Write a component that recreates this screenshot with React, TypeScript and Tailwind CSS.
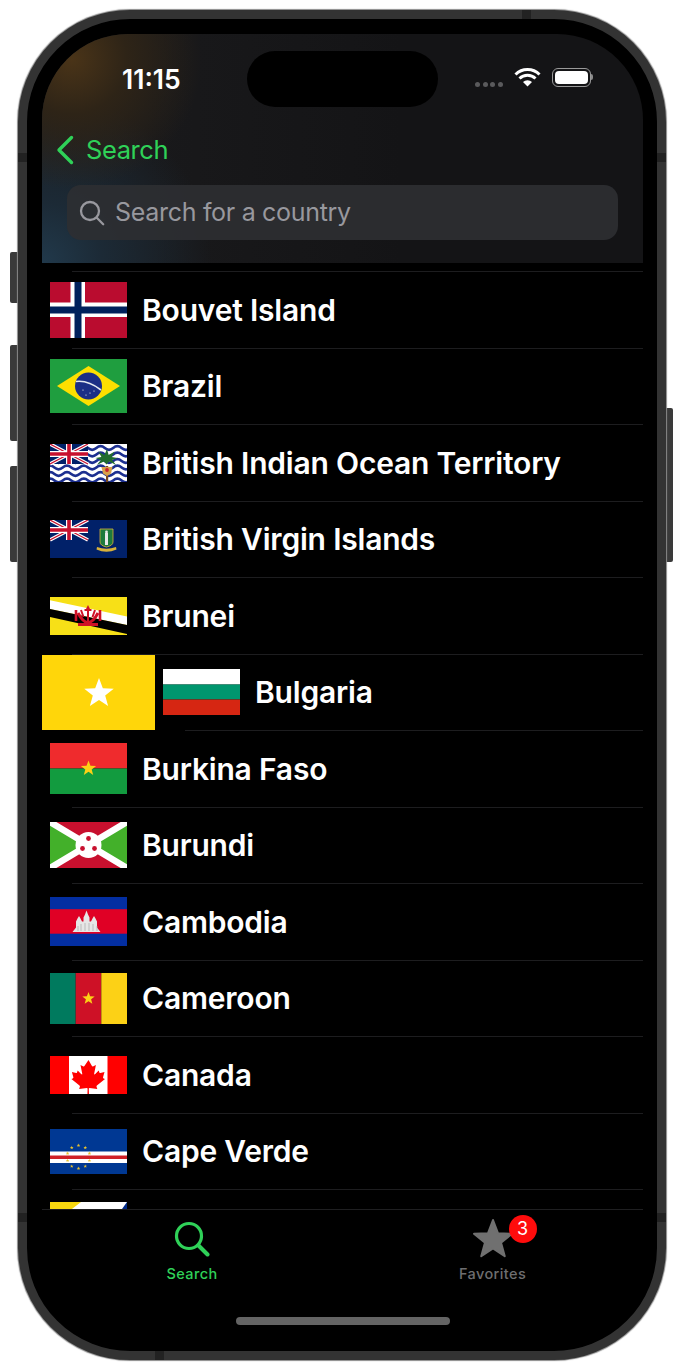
import React from 'react';

const star = (cx: number, cy: number, r: number) => {
  const pts: string[] = [];
  for (let i = 0; i < 10; i++) {
    const rad = i % 2 === 0 ? r : r * 0.42;
    const a = -Math.PI / 2 + (i * Math.PI) / 5;
    pts.push(`${(cx + rad * Math.cos(a)).toFixed(2)},${(cy + rad * Math.sin(a)).toFixed(2)}`);
  }
  return pts.join(' ');
};

// union jack canton, 38x20
const Jack = () => (
  <g>
    <rect width="38" height="20" fill="#012169" />
    <path d="M0 0L38 20M38 0L0 20" stroke="#fff" strokeWidth="3.6" />
    <path d="M0 0L38 20M38 0L0 20" stroke="#c8102e" strokeWidth="1.2" />
    <path d="M19 0V20M0 10H38" stroke="#fff" strokeWidth="6" />
    <path d="M19 0V20M0 10H38" stroke="#c8102e" strokeWidth="3.6" />
  </g>
);

const Flag = ({ h, children }: { h: number; children: React.ReactNode }) => (
  <svg width="77" height={h} viewBox={`0 0 77 ${h}`} className="block shrink-0">
    {children}
  </svg>
);

const flags: Record<string, React.ReactNode> = {
  bouvet: (
    <Flag h={56}>
      <rect width="77" height="56" fill="#ba0c2f" />
      <path d="M20.5 0h14.5v56h-14.5zM0 20.5h77v14.5h-77z" fill="#fff" />
      <path d="M24.5 0h7v56h-7zM0 24.5h77v7h-77z" fill="#00205b" />
    </Flag>
  ),
  brazil: (
    <Flag h={54}>
      <rect width="77" height="54" fill="#1f9e3f" />
      <path d="M7 27L38.5 7L70 27L38.5 47Z" fill="#fedf00" />
      <circle cx="38.5" cy="27" r="13.5" fill="#1b2e86" />
      <path d="M26 22.5Q38 21 51 31" fill="none" stroke="#e4e8f0" strokeWidth="1.6" />
      <circle cx="33" cy="31" r="0.6" fill="#fff" />
      <circle cx="40" cy="34" r="0.6" fill="#fff" />
      <circle cx="44" cy="32" r="0.6" fill="#fff" />
      <circle cx="36" cy="36" r="0.6" fill="#fff" />
    </Flag>
  ),
  biot: (
    <Flag h={38}>
      <rect width="77" height="38" fill="#fff" />
      {[4, 10.5, 17, 23.5, 30, 36.5].map((y) => (
        <path
          key={y}
          d={`M-4 ${y}q4.2 -3.6 8.4 0t8.4 0t8.4 0t8.4 0t8.4 0t8.4 0t8.4 0t8.4 0t8.4 0t8.4 0`}
          fill="none"
          stroke="#1c2f90"
          strokeWidth="2.6"
        />
      ))}
      <Jack />
      <rect x="56" y="22" width="2.2" height="16" fill="#7a4a1e" />
      <path d="M57 5l1.6 6l6 -3.5l-3 5.5l6 1l-5.5 2l4 5l-7 -3.5l-2.6 3l-2.6 -3l-7 3.5l4 -5l-5.5 -2l6 -1l-3 -5.5l6 3.5z" fill="#1f6b2e" />
      <path d="M51.5 23h11l-1.5 6.5l-4 2.5l-4 -2.5z" fill="#d8a04a" />
      <circle cx="57" cy="26" r="1.9" fill="#c8202e" />
    </Flag>
  ),
  bvi: (
    <Flag h={38}>
      <rect width="77" height="38" fill="#012169" />
      <Jack />
      <path d="M50 9h13v13q0 3.5 -6.5 5q-6.5 -1.5 -6.5 -5z" fill="#1e7a3c" stroke="#d8b13a" strokeWidth="0.8" />
      <path d="M55 13h3v12h-3z" fill="#e8e8e8" />
      <circle cx="56.5" cy="12" r="1.4" fill="#e8e8e8" />
      <path d="M47 27q9.5 3.5 19 0l.5 2.5q-10 4.5 -20 0z" fill="#d8b13a" />
    </Flag>
  ),
  brunei: (
    <Flag h={38}>
      <rect width="77" height="38" fill="#f7e017" />
      <path d="M0 3.3L77 19.5V28L0 12Z" fill="#fff" />
      <path d="M0 12L77 28V37L0 20Z" fill="#000" />
      <path d="M38 10V25M34.5 13h7M31 13l2.5 7M45 13l-2.5 7" stroke="#cf1126" strokeWidth="2" fill="none" />
      <path d="M38 8l2.5 5h-5z" fill="#cf1126" />
      <path d="M28 16Q38 35 48 16" stroke="#cf1126" strokeWidth="3" fill="none" />
      <path d="M26 13v11M50 13v11" stroke="#cf1126" strokeWidth="2.6" />
      <path d="M28 26h20v3h-20z" fill="#cf1126" />
    </Flag>
  ),
  bulgaria: (
    <Flag h={46}>
      <rect width="77" height="15.5" fill="#fff" />
      <rect y="15.5" width="77" height="15" fill="#00966e" />
      <rect y="30.5" width="77" height="15.5" fill="#d62612" />
    </Flag>
  ),
  burkina: (
    <Flag h={51}>
      <rect width="77" height="25.5" fill="#ef2b2d" />
      <rect y="25.5" width="77" height="25.5" fill="#129b3f" />
      <polygon points={star(38.5, 25.5, 8)} fill="#fcd116" />
    </Flag>
  ),
  burundi: (
    <Flag h={46}>
      <rect width="77" height="46" fill="#c8102e" />
      <path d="M0 0L38.5 23L0 46ZM77 0L38.5 23L77 46Z" fill="#43b02a" />
      <path d="M0 0L77 46M77 0L0 46" stroke="#fff" strokeWidth="6.5" />
      <circle cx="38.5" cy="23" r="13" fill="#fff" />
      <circle cx="38.5" cy="16.5" r="2.4" fill="#c8102e" />
      <circle cx="32.5" cy="26.5" r="2.4" fill="#c8102e" />
      <circle cx="44.5" cy="26.5" r="2.4" fill="#c8102e" />
    </Flag>
  ),
  cambodia: (
    <Flag h={49}>
      <rect width="77" height="49" fill="#032ea1" />
      <rect y="12.2" width="77" height="24.5" fill="#e00025" />
      <path d="M22.5 35l3.5 -4.5v-6l1.5 -3l1.5 -2.5l1.5 2.5l1.5 3h1.5v-4l1.5 -3l1.5 -4l1.5 4l1.5 3v4h1.5l1.5 -3l1.5 -2.5l1.5 2.5l1.5 3v6l3.5 4.5z" fill="#e6e6e6" />
      <path d="M31 34v-7M35 34v-8M39 34v-8M43 34v-7M47 34v-5M28 34v-5" stroke="#a8a8a8" strokeWidth="0.7" />
    </Flag>
  ),
  cameroon: (
    <Flag h={51}>
      <rect width="25.7" height="51" fill="#007a5e" />
      <rect x="25.7" width="25.6" height="51" fill="#ce1126" />
      <rect x="51.3" width="25.7" height="51" fill="#fcd116" />
      <polygon points={star(38.5, 25.5, 6.5)} fill="#fcd116" />
    </Flag>
  ),
  canada: (
    <Flag h={38}>
      <rect width="77" height="38" fill="#ff0000" />
      <rect x="19" width="38.5" height="38" fill="#fff" />
      <path d="M38.5 4l3.3 5.8q.6.9 1.6.4l2.5 -1.3l-1.7 8.6q-.3 1.6 1.1.6l3.4 -3.7l.7 2q.2.6.9.5l4.2 -.9l-1.4 5q-.3 1 .5 1.4l1.4.7l-8.1 6.5q-.6.6-.3 1.3l.7 2.2l-7.8 -1.1q-.7 0-.7.7l.2 6.2h-1.6l.2 -6.2q0-.7-.7-.7l-7.8 1.1l.7 -2.2q.3-.7-.3-1.3l-8.1 -6.5l1.4 -.7q.8-.4.5 -1.4l-1.4 -5l4.2 .9q.7.1 .9 -.5l.7 -2l3.4 3.7q1.4 1 1.1 -.6l-1.7 -8.6l2.5 1.3q1 .5 1.6 -.4z" fill="#ff0000" />
    </Flag>
  ),
  capeverde: (
    <Flag h={45}>
      <rect width="77" height="45" fill="#003893" />
      <rect y="22.5" width="77" height="11.5" fill="#fff" />
      <rect y="26.5" width="77" height="3.5" fill="#cf2027" />
      {Array.from({ length: 10 }).map((_, i) => {
        const a = -Math.PI / 2 + (i * Math.PI) / 5;
        return (
          <polygon key={i} points={star(28.5 + 11.5 * Math.cos(a), 28 + 11.5 * Math.sin(a), 1.9)} fill="#e8c22e" />
        );
      })}
    </Flag>
  ),
  caribbean: (
    <Flag h={52}>
      <rect width="77" height="52" fill="#fff" />
      <path d="M0 0H31L0 24Z" fill="#f9d90f" />
      <path d="M77 0V52H40Z" fill="#012a87" />
    </Flag>
  ),
};

const countries = [
  { key: 'bouvet', name: 'Bouvet Island' },
  { key: 'brazil', name: 'Brazil' },
  { key: 'biot', name: 'British Indian Ocean Territory' },
  { key: 'bvi', name: 'British Virgin Islands' },
  { key: 'brunei', name: 'Brunei' },
  { key: 'bulgaria', name: 'Bulgaria', swiped: true },
  { key: 'burkina', name: 'Burkina Faso' },
  { key: 'burundi', name: 'Burundi' },
  { key: 'cambodia', name: 'Cambodia' },
  { key: 'cameroon', name: 'Cameroon' },
  { key: 'canada', name: 'Canada' },
  { key: 'capeverde', name: 'Cape Verde' },
  // only the top of this flag shows above the tab bar
  { key: 'caribbean', name: '' },
];

const Row = ({ flag, name, swiped }: { flag: string; name: string; swiped?: boolean }) => (
  <div className="flex h-[75.5px] items-center">
    {swiped && (
      <div className="flex h-[75.5px] w-[113px] shrink-0 items-center justify-center bg-[#ffd60a]">
        <svg width="32" height="32" viewBox="0 0 32 32" className="mt-[2px]">
          <polygon points={star(16, 16.5, 15.5)} fill="#fff" />
        </svg>
      </div>
    )}
    <div className="ml-2 shrink-0">{flags[flag]}</div>
    {name && <span className="ml-[15px] whitespace-nowrap pt-px text-[30px] font-semibold tracking-[-0.2px] text-white">{name}</span>}
  </div>
);

export default function App() {
  return (
    <div className="relative h-[1366px] w-[684px] bg-white pl-[18px] pt-[10px] font-['Inter',sans-serif]">
      {/* hardware buttons */}
      <div className="absolute left-[10px] top-[252px] h-[51px] w-2 rounded-l-[2px] bg-[#3a3a3a]" />
      <div className="absolute left-[10px] top-[345px] h-[96px] w-2 rounded-l-[2px] bg-[#3a3a3a]" />
      <div className="absolute left-[10px] top-[466px] h-[96px] w-2 rounded-l-[2px] bg-[#3a3a3a]" />
      <div className="absolute left-[666px] top-[408px] h-[154px] w-[7px] rounded-r-[2px] bg-[#3a3a3a]" />

      <div className="relative h-[1350px] w-[648px] rounded-[112px] border-[9px] border-[#333333] bg-black p-[15px] shadow-[0_0_1px_1px_#8a8a8a]">
        {/* antenna bands */}
        <div className="absolute left-[-9px] top-[134px] h-[9px] w-[9px] bg-[#222222]" />
        <div className="absolute right-[-9px] top-[134px] h-[9px] w-[9px] bg-[#222222]" />
        <div className="absolute left-[-9px] top-[1194px] h-[9px] w-[9px] bg-[#222222]" />
        <div className="absolute right-[-9px] top-[1194px] h-[9px] w-[9px] bg-[#222222]" />
        <div className="absolute left-[495px] top-[-9px] h-[9px] w-[9px] bg-[#222222]" />
        <div className="absolute bottom-[-9px] left-[128px] h-[9px] w-[9px] bg-[#222222]" />

        <div className="flex h-[1304px] w-[601px] flex-col overflow-hidden rounded-[86px] bg-black">
          {/* header */}
          <div className="relative h-[229px] shrink-0 bg-[radial-gradient(circle_at_30px_25px,#4a3418_0,#2e2417_55px,transparent_130px),radial-gradient(circle_at_0px_229px,#21394b_0,#1c2a36_60px,transparent_170px),linear-gradient(90deg,#1b1b1d,#141416_60%)]">
            <div className="absolute left-[205px] top-[17px] h-[56px] w-[191px] rounded-full bg-black" />
            <div className="flex h-[88px] items-start justify-between pl-[80px] pr-[50px] pt-[30px]">
              <span className="text-[26.5px] font-semibold leading-[30px] text-white">11:15</span>
              <div className="mt-[3px] flex items-center">
                <div className="mr-[11px] mt-[14px] flex gap-[2.7px]">
                  <i className="h-[5px] w-[5px] rounded-full bg-[#5a5a5c]" />
                  <i className="h-[5px] w-[5px] rounded-full bg-[#5a5a5c]" />
                  <i className="h-[5px] w-[5px] rounded-full bg-[#5a5a5c]" />
                  <i className="h-[5px] w-[5px] rounded-full bg-[#5a5a5c]" />
                </div>
                <svg width="27" height="20" viewBox="0 0 27 20" className="mr-[11px]">
                  <path d="M1.5 7.5A17 17 0 0 1 25.5 7.5M5.5 11.5A11.5 11.5 0 0 1 21.5 11.5" fill="none" stroke="#fff" strokeWidth="3" />
                  <path d="M9 15a6.5 6.5 0 0 1 9 0l-4.5 4.5z" fill="#fff" />
                </svg>
                <div className="flex items-center">
                  <div className="h-[19px] w-[39px] rounded-[6px] border border-[#9a9a9a] p-[2px]">
                    <div className="h-full w-full rounded-[4px] bg-white" />
                  </div>
                  <div className="h-[6px] w-[2px] rounded-r-full bg-[#8a8a8a]" />
                </div>
              </div>
            </div>
            <div className="flex h-[63px] items-center gap-[12px] pb-[8px] pl-[14px]">
              <svg width="18" height="30" viewBox="0 0 18 30" fill="none" stroke="#2fd158" strokeWidth="3.4" strokeLinecap="round" strokeLinejoin="round">
                <path d="M15.5 2.5L3 15l12.5 12.5" />
              </svg>
              <span className="text-[25.5px] leading-[32px] tracking-[-0.4px] text-[#2fd158]">Search</span>
            </div>
            <div className="mx-[25px] flex h-[55px] items-center rounded-[14px] bg-[#2e2f32]/90 pl-[12px]">
              <svg width="26" height="26" viewBox="0 0 26 26" fill="none" stroke="#98989e" strokeWidth="2.3" strokeLinecap="round">
                <circle cx="11" cy="11" r="9" />
                <path d="M17.8 17.8L24.2 24.2" />
              </svg>
              <span className="ml-[10px] pt-px text-[25px] tracking-[-0.3px] text-[#98989e]">Search for a country</span>
            </div>
          </div>

          {/* list */}
          <div className="min-h-0 flex-1 overflow-hidden pt-2">
            <div className="ml-[30px] h-px bg-[#1d1d1f]" />
            {countries.map((c) => (
              <div key={c.key}>
                <Row flag={c.key} name={c.name} swiped={c.swiped} />
                <div className={c.swiped ? 'ml-[143px] h-px bg-[#1d1d1f]' : 'ml-[30px] h-px bg-[#1d1d1f]'} />
              </div>
            ))}
          </div>

          {/* tab bar */}
          <div className="flex h-[129px] shrink-0 flex-col border-t border-[#1f1f21] bg-black">
            <div className="flex h-[107px] pt-[11px]">
              <div className="flex w-[300px] flex-col items-center">
                <svg width="36" height="36" viewBox="0 0 36 36" fill="none" stroke="#2fd158" strokeWidth="3.2" strokeLinecap="round">
                  <circle cx="15" cy="15" r="12.5" />
                  <path d="M24.5 24.5L33.5 33.5" strokeWidth="4" />
                </svg>
                <span className="mt-[7px] text-[14.5px] font-medium leading-[20px] tracking-[0.4px] text-[#2fd158]">Search</span>
              </div>
              <div className="flex w-[301px] flex-col items-center">
                <div className="relative">
                  <svg width="36" height="36" viewBox="0 0 36 36" className="overflow-visible">
                    <polygon points={star(18, 19, 20)} fill="#707070" stroke="#707070" strokeWidth="2" strokeLinejoin="round" />
                  </svg>
                  <div className="absolute left-[34px] top-[-6px] flex h-[28px] w-[28px] items-center justify-center rounded-full bg-[#ff0c0c] text-[18px] leading-none text-white">3</div>
                </div>
                <span className="mt-[7px] text-[14.5px] font-medium leading-[20px] tracking-[0.4px] text-[#6e6e70]">Favorites</span>
              </div>
            </div>
            <div className="mx-auto h-2 w-[214px] rounded-full bg-[#646464]" />
          </div>
        </div>
      </div>
    </div>
  );
}
